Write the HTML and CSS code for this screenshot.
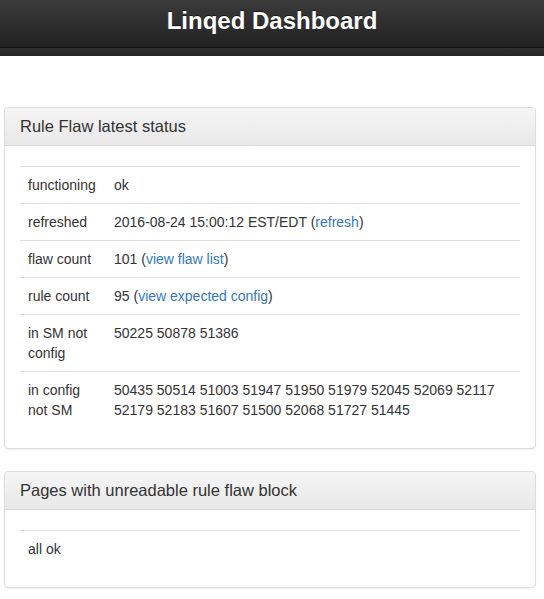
FILE: index.html
```html
<!DOCTYPE html>
<html>
<head>
<meta charset="utf-8">
<title>Linqed Dashboard</title>
<link rel="stylesheet" href="styles.css">
</head>
<body>
<header class="navbar">
  <div class="navbar-main"><h1 class="brand">Linqed Dashboard</h1></div>
  <div class="navbar-strip"></div>
</header>
<main class="container">
  <section class="panel">
    <div class="panel-heading"><h3 class="panel-title">Rule Flaw latest status</h3></div>
    <div class="panel-body">
      <table class="table">
        <tbody>
          <tr><td class="key">functioning</td><td>ok</td></tr>
          <tr><td class="key">refreshed</td><td>2016-08-24 15:00:12 EST/EDT (<a href="#">refresh</a>)</td></tr>
          <tr><td class="key">flaw count</td><td>101 (<a href="#">view flaw list</a>)</td></tr>
          <tr><td class="key">rule count</td><td>95 (<a href="#">view expected config</a>)</td></tr>
          <tr><td class="key">in SM not config</td><td>50225 50878 51386</td></tr>
          <tr><td class="key">in config not SM</td><td>50435 50514 51003 51947 51950 51979 52045 52069 52117 52179 52183 51607 51500 52068 51727 51445</td></tr>
        </tbody>
      </table>
    </div>
  </section>
  <section class="panel">
    <div class="panel-heading"><h3 class="panel-title">Pages with unreadable rule flaw block</h3></div>
    <div class="panel-body">
      <table class="table">
        <tbody>
          <tr><td>all ok</td></tr>
        </tbody>
      </table>
    </div>
  </section>
</main>
</body>
</html>
```
FILE: styles.css
```css
* { box-sizing: border-box; }
html, body { margin: 0; padding: 0; }
body {
  font-family: "Liberation Sans", Arial, Helvetica, sans-serif;
  font-size: 14px;
  line-height: 20px;
  color: #333;
  background: #fff;
}
.navbar-main {
  height: 48px;
  background: linear-gradient(to bottom, #3b3b3b 0%, #222 100%);
  border-bottom: 1px solid #111;
  display: flex;
  justify-content: center;
}
.navbar-strip {
  height: 8px;
  background: linear-gradient(to bottom, #303030, #262626);
}
.brand {
  margin: 0;
  padding-top: 7px;
  font-size: 24px;
  line-height: 28px;
  font-weight: bold;
  color: #fff;
  text-shadow: 0 -1px 0 rgba(0,0,0,0.5);
}
.container {
  padding: 51px 8px 0 4px;
}
.panel {
  border: 1px solid #ddd;
  border-radius: 4px;
  background: #fff;
  box-shadow: 0 1px 2px rgba(0,0,0,0.06);
  margin-bottom: 22px;
}
.panel-heading {
  padding: 10px 15px;
  background: linear-gradient(to bottom, #f5f5f5 0%, #e8e8e8 100%);
  border-bottom: 1px solid #ddd;
  border-radius: 3px 3px 0 0;
}
.panel-title {
  margin: 0;
  font-size: 16.5px;
  line-height: 17px;
  font-weight: normal;
  color: #333;
}
.panel-body {
  padding: 20px 15px 20px 15px;
}
.table {
  width: 100%;
  border-collapse: collapse;
  border-spacing: 0;
}
.table td {
  padding: 8px;
  line-height: 20px;
  vertical-align: top;
  border-top: 1px solid #ddd;
  text-align: left;
}
.table td.key {
  width: 86px;
}
a {
  color: #337ab7;
  text-decoration: none;
}
```
